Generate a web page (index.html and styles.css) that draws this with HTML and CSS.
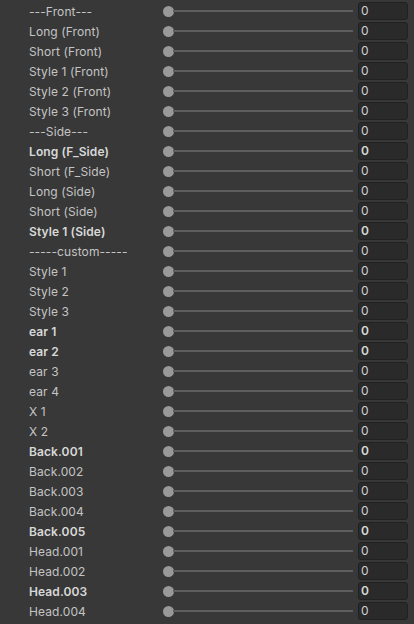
FILE: index.html
```html
<!DOCTYPE html>
<html>
<head>
<meta charset="utf-8">
<link rel="stylesheet" href="styles.css">
</head>
<body>
<div class="list">
  <div class="row"><span class="label">---Front---</span><div class="slider"><span class="knob"></span><span class="track"></span></div><div class="field">0</div></div>
  <div class="row"><span class="label">Long (Front)</span><div class="slider"><span class="knob"></span><span class="track"></span></div><div class="field">0</div></div>
  <div class="row"><span class="label">Short (Front)</span><div class="slider"><span class="knob"></span><span class="track"></span></div><div class="field">0</div></div>
  <div class="row"><span class="label">Style 1 (Front)</span><div class="slider"><span class="knob"></span><span class="track"></span></div><div class="field">0</div></div>
  <div class="row"><span class="label">Style 2 (Front)</span><div class="slider"><span class="knob"></span><span class="track"></span></div><div class="field">0</div></div>
  <div class="row"><span class="label">Style 3 (Front)</span><div class="slider"><span class="knob"></span><span class="track"></span></div><div class="field">0</div></div>
  <div class="row"><span class="label">---Side---</span><div class="slider"><span class="knob"></span><span class="track"></span></div><div class="field">0</div></div>
  <div class="row mod"><span class="label">Long (F_Side)</span><div class="slider"><span class="knob"></span><span class="track"></span></div><div class="field">0</div></div>
  <div class="row"><span class="label">Short (F_Side)</span><div class="slider"><span class="knob"></span><span class="track"></span></div><div class="field">0</div></div>
  <div class="row"><span class="label">Long (Side)</span><div class="slider"><span class="knob"></span><span class="track"></span></div><div class="field">0</div></div>
  <div class="row"><span class="label">Short (Side)</span><div class="slider"><span class="knob"></span><span class="track"></span></div><div class="field">0</div></div>
  <div class="row mod"><span class="label">Style 1 (Side)</span><div class="slider"><span class="knob"></span><span class="track"></span></div><div class="field">0</div></div>
  <div class="row"><span class="label">-----custom-----</span><div class="slider"><span class="knob"></span><span class="track"></span></div><div class="field">0</div></div>
  <div class="row"><span class="label">Style 1</span><div class="slider"><span class="knob"></span><span class="track"></span></div><div class="field">0</div></div>
  <div class="row"><span class="label">Style 2</span><div class="slider"><span class="knob"></span><span class="track"></span></div><div class="field">0</div></div>
  <div class="row"><span class="label">Style 3</span><div class="slider"><span class="knob"></span><span class="track"></span></div><div class="field">0</div></div>
  <div class="row mod"><span class="label">ear 1</span><div class="slider"><span class="knob"></span><span class="track"></span></div><div class="field">0</div></div>
  <div class="row mod"><span class="label">ear 2</span><div class="slider"><span class="knob"></span><span class="track"></span></div><div class="field">0</div></div>
  <div class="row"><span class="label">ear 3</span><div class="slider"><span class="knob"></span><span class="track"></span></div><div class="field">0</div></div>
  <div class="row"><span class="label">ear 4</span><div class="slider"><span class="knob"></span><span class="track"></span></div><div class="field">0</div></div>
  <div class="row"><span class="label">X 1</span><div class="slider"><span class="knob"></span><span class="track"></span></div><div class="field">0</div></div>
  <div class="row"><span class="label">X 2</span><div class="slider"><span class="knob"></span><span class="track"></span></div><div class="field">0</div></div>
  <div class="row mod"><span class="label">Back.001</span><div class="slider"><span class="knob"></span><span class="track"></span></div><div class="field">0</div></div>
  <div class="row"><span class="label">Back.002</span><div class="slider"><span class="knob"></span><span class="track"></span></div><div class="field">0</div></div>
  <div class="row"><span class="label">Back.003</span><div class="slider"><span class="knob"></span><span class="track"></span></div><div class="field">0</div></div>
  <div class="row"><span class="label">Back.004</span><div class="slider"><span class="knob"></span><span class="track"></span></div><div class="field">0</div></div>
  <div class="row mod"><span class="label">Back.005</span><div class="slider"><span class="knob"></span><span class="track"></span></div><div class="field">0</div></div>
  <div class="row"><span class="label">Head.001</span><div class="slider"><span class="knob"></span><span class="track"></span></div><div class="field">0</div></div>
  <div class="row"><span class="label">Head.002</span><div class="slider"><span class="knob"></span><span class="track"></span></div><div class="field">0</div></div>
  <div class="row mod"><span class="label">Head.003</span><div class="slider"><span class="knob"></span><span class="track"></span></div><div class="field">0</div></div>
  <div class="row"><span class="label">Head.004</span><div class="slider"><span class="knob"></span><span class="track"></span></div><div class="field">0</div></div>
</div>
</body>
</html>
```
FILE: styles.css
```css
html, body {
  margin: 0;
  padding: 0;
  background: #383838;
  overflow: hidden;
}
body {
  font-family: Inter, "Noto Sans", "Liberation Sans", sans-serif;
  font-size: 12px;
  color: #c4c4c4;
}
.list {
  display: flex;
  flex-direction: column;
  padding-top: 1px;
}
.row {
  display: flex;
  align-items: center;
  height: 20px;
}
.label {
  width: 134px;
  padding-left: 29px;
  white-space: nowrap;
  overflow: hidden;
  letter-spacing: 0.1px;
}
.slider {
  flex: 1;
  display: flex;
  align-items: center;
  margin-right: 5px;
}
.knob {
  width: 11px;
  height: 11px;
  border-radius: 50%;
  background: #999999;
  flex: none;
}
.track {
  flex: 1;
  height: 2px;
  background: #5e5e5e;
  margin-left: -1px;
}
.field {
  width: 46px;
  height: 16px;
  margin-right: 6px;
  background: #2a2a2a;
  border: 1px solid #212121;
  border-radius: 3px;
  padding-left: 2px;
  line-height: 16px;
  color: #d2d2d2;
}
.mod .label,
.mod .field {
  font-weight: 600;
  color: #d8d8d8;
}
```
